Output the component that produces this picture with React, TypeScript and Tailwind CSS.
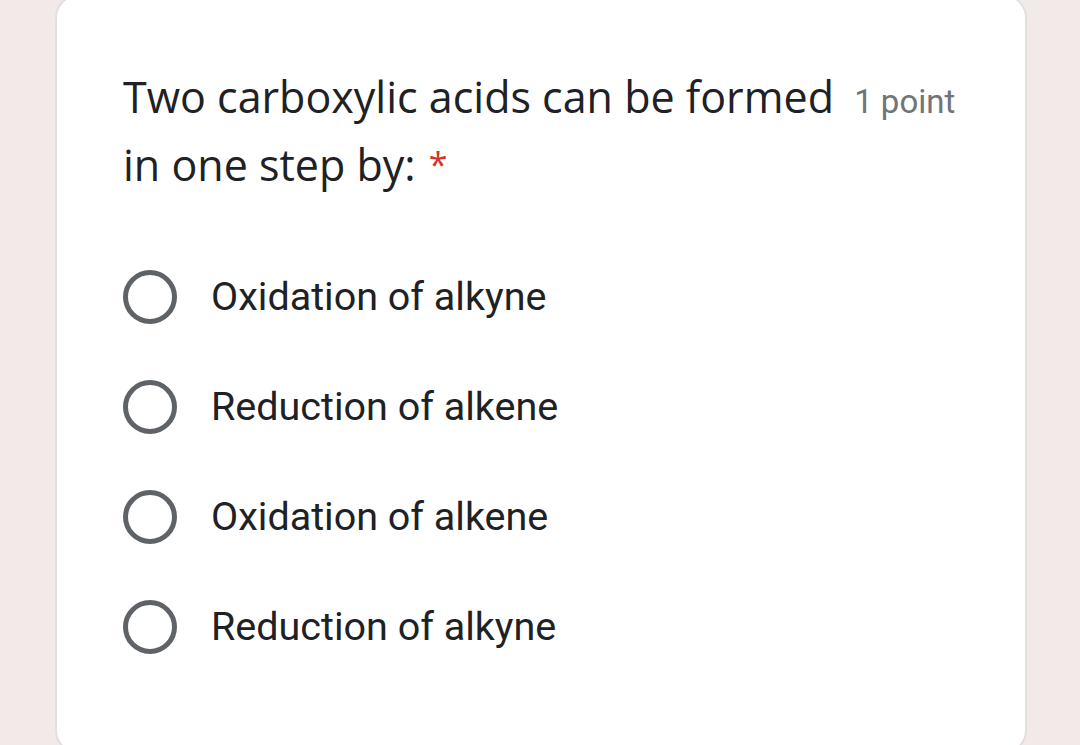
export default function App() {
  const options = [
    'Oxidation of alkyne',
    'Reduction of alkene',
    'Oxidation of alkene',
    'Reduction of alkyne',
  ]

  return (
    <div className="h-[745px] w-[1080px] overflow-hidden bg-[#f2eae9]">
      <div className="ml-[55px] mt-[-6px] h-[760px] w-[972px] rounded-[24px] border-2 border-[#e3dfde] bg-white pl-[66px] pr-[40px] pt-[69px]">
        <div className="font-['Open_Sans',sans-serif] text-[43px] leading-[63px] text-[#202124]">
          Two carboxylic acids can be formed{' '}
          <span className="ml-[9px] font-['Roboto',sans-serif] text-[33px] text-[#70757a]">
            1 point
          </span>
          <br />
          in one step by:{' '}
          <span className="ml-[2px] align-[4px] text-[34px] text-[#d93025]">*</span>
        </div>

        <div className="mt-[74px] flex flex-col gap-[56px]">
          {options.map((opt) => (
            <div key={opt} className="flex items-center gap-[34px]">
              <div className="h-[54px] w-[54px] rounded-full border-[5px] border-[#5f6368]" />
              <span className="font-['Roboto',sans-serif] text-[39.5px] leading-[52px] text-[#202124]">
                {opt}
              </span>
            </div>
          ))}
        </div>
      </div>
    </div>
  )
}
